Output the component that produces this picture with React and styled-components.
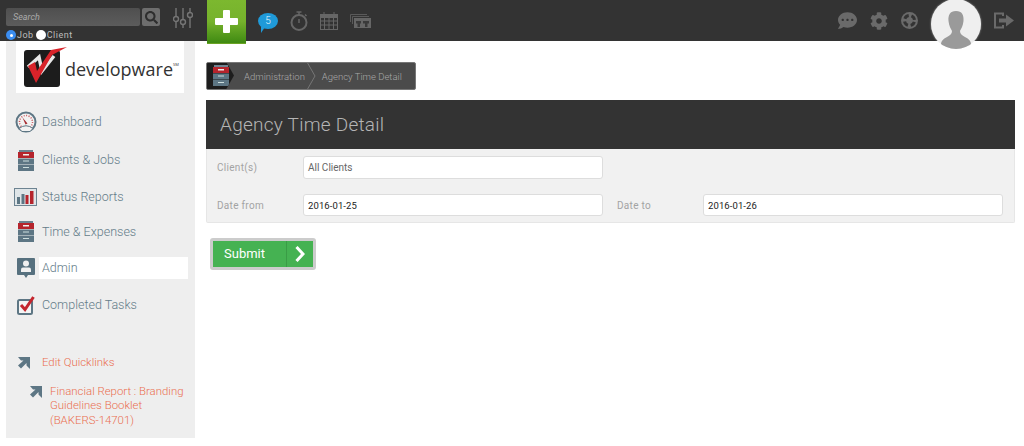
import React from "react";
import styled, { createGlobalStyle } from "styled-components";
import { FaSearch, FaCommentDots, FaCog } from "react-icons/fa";

const GlobalStyle = createGlobalStyle`
  html, body { margin: 0; padding: 0; background: #fff; }
  body { font-family: "Roboto", "Liberation Sans", sans-serif; overflow: hidden; }
  * { box-sizing: border-box; }
`;

const Page = styled.div`
  width: 1024px;
  height: 446px;
  position: relative;
  overflow: hidden;
`;

const TopBar = styled.header`
  height: 41px;
  background: #333;
  display: flex;
  align-items: flex-start;
  position: relative;
`;

const SearchBlock = styled.div`
  width: 207px;
  padding: 8px 0 0 6px;
  display: flex;
  flex-wrap: wrap;
  align-items: flex-start;
`;

const SearchField = styled.div`
  width: 134px;
  height: 18px;
  background: linear-gradient(#4f4f4f, #5c5c5c);
  border-radius: 2px;
  color: #aaa;
  font-size: 9px;
  font-style: italic;
  line-height: 19px;
  padding-left: 7px;
`;

const SearchBtn = styled.div`
  width: 18px;
  height: 18px;
  margin-left: 2px;
  background: #6e6e6e;
  border-radius: 2px;
  display: flex;
  align-items: center;
  justify-content: center;
  color: #2e2e2e;
`;

const Sliders = styled.svg`
  width: 20px;
  height: 20px;
  margin-left: 13px;
`;

const Radios = styled.div`
  width: 100%;
  display: flex;
  align-items: center;
  height: 12px;
  margin-top: 1px;
  color: #bdbdbd;
  font-size: 9px;
  letter-spacing: 0.5px;
`;

const Radio = styled.span`
  width: 10px;
  height: 10px;
  border-radius: 50%;
  background: ${(p) => (p.$on ? "#3b8df0" : "#fff")};
  display: flex;
  align-items: center;
  justify-content: center;
  margin-right: 1px;
  &:not(:first-child) { margin-left: 2px; }
  &::after {
    content: "";
    width: 3px;
    height: 3px;
    border-radius: 50%;
    background: ${(p) => (p.$on ? "#fff" : "transparent")};
  }
`;

const AddBtn = styled.div`
  width: 39px;
  height: 44px;
  background: linear-gradient(#7cb82f 0%, #76b22c 50%, #3f8a12 100%);
  border-bottom: 1px solid #6aa324;
  display: flex;
  align-items: center;
  justify-content: center;
  flex-shrink: 0;
  z-index: 3;
`;

const ToolIcons = styled.div`
  display: flex;
  align-items: center;
  height: 41px;
  margin-left: 12px;
  gap: 12px;
  color: #666;
`;

const Bubble = styled.div`
  position: relative;
  width: 20px;
  height: 16px;
  background: #1f9ad9;
  border-radius: 50%;
  color: #e8f5fc;
  font-size: 10px;
  font-weight: 300;
  text-align: center;
  line-height: 16px;
  &::after {
    content: "";
    position: absolute;
    left: 3px;
    bottom: -4px;
    border-left: 4px solid #1f9ad9;
    border-bottom: 6px solid transparent;
  }
`;

const RightIcons = styled.div`
  margin-left: auto;
  display: flex;
  align-items: center;
  gap: 13px;
  height: 41px;
  color: #6a6a6a;
  padding-right: 10px;
`;

const AvatarWrap = styled.div`
  width: 50px;
  height: 50px;
  margin-top: -1px;
  align-self: flex-start;
  border-radius: 50%;
  background: #efefef;
  overflow: hidden;
  box-shadow: 0 0 2px rgba(255, 255, 255, 0.6);
  z-index: 3;
  svg { display: block; }
`;

const Body = styled.div`
  display: flex;
  align-items: flex-start;
`;

const Sidebar = styled.aside`
  width: 189px;
  height: 397px;
  margin-left: 6px;
  background: #eee;
`;

const LogoBox = styled.div`
  width: 168px;
  height: 52px;
  margin-left: 10px;
  background: #fff;
  display: flex;
  align-items: center;
  padding-left: 8px;
`;

const LogoText = styled.span`
  color: #333;
  font-family: "Open Sans", "Liberation Sans", sans-serif;
  font-size: 18px;
  margin-left: -2px;
  position: relative;
  top: 2px;
  white-space: nowrap;
  sup { font-size: 4px; vertical-align: 10px; }
`;

const Nav = styled.nav`
  padding-top: 10px;
`;

const NavRow = styled.div`
  height: ${(p) => p.$h}px;
  display: flex;
  align-items: center;
  padding-left: 6px;
  color: #647c89;
  font-size: 12.5px;
  font-weight: 300;
`;

const NavIcon = styled.div`
  width: 27px;
  height: 24px;
  display: flex;
  align-items: center;
  justify-content: center;
  flex-shrink: 0;
`;

const NavLabel = styled.div`
  width: 149px;
  height: 22px;
  line-height: 22px;
  padding-left: 3px;
  background: ${(p) => (p.$active ? "#fff" : "transparent")};
`;

const Quick = styled.div`
  display: flex;
  align-items: flex-start;
  color: #ea6f50;
  font-size: 11.4px;
  font-weight: 300;
  line-height: 14.5px;
  white-space: nowrap;
  padding-left: ${(p) => p.$indent}px;
  margin-top: ${(p) => p.$top}px;
  svg { flex-shrink: 0; margin-right: ${(p) => p.$gap}px; margin-top: 1px; }
`;

const Main = styled.main`
  flex: 1;
  padding: 21px 9px 0 11px;
`;

const Crumbs = styled.div`
  width: 210px;
  height: 28px;
  background: #4b4b4b;
  border: 1px solid #777;
  border-radius: 2px;
  display: flex;
  align-items: center;
  color: #a9a9a9;
  font-size: 9.5px;
  font-weight: 300;
  white-space: nowrap;
  position: relative;
  overflow: hidden;
`;

const CrumbHead = styled.div`
  width: 28px;
  height: 28px;
  margin: -1px 10px 0 -1px;
  background: #1d1d1d;
  clip-path: polygon(0 0, 20px 0, 28px 50%, 20px 100%, 0 100%);
  display: flex;
  align-items: center;
  padding-left: 7px;
  flex-shrink: 0;
`;

const CrumbSep = styled.svg`
  width: 10px;
  height: 28px;
  margin: 0 6px 0 1px;
  flex-shrink: 0;
`;

const Panel = styled.section`
  margin-top: 10px;
  width: 809px;
`;

const PanelTitle = styled.h1`
  margin: 0;
  height: 49px;
  background: #333;
  color: #b5b5b5;
  font-size: 19px;
  font-weight: 300;
  letter-spacing: 0.25px;
  line-height: 50px;
  padding-left: 14px;
`;

const PanelBody = styled.div`
  height: 74px;
  background: #f1f1f1;
  border: 1px solid #e6e6e6;
  border-top: 0;
  border-radius: 0 0 2px 2px;
  padding: 7px 11px 0 10px;
  display: grid;
  grid-template-columns: 86px 300px 100px 300px;
  grid-template-rows: 23px 22px;
  row-gap: 15px;
  align-items: center;
`;

const FieldLabel = styled.label`
  color: #a3a3a3;
  font-size: 10px;
  letter-spacing: 0.3px;
  font-weight: 400;
  margin-left: ${(p) => p.$shift || 0}px;
`;

const Field = styled.div`
  height: 100%;
  background: #fff;
  border: 1px solid #ddd;
  border-radius: 3px;
  color: ${(p) => (p.$big ? "#666" : "#222")};
  font-size: ${(p) => (p.$big ? 10 : 9.5)}px;
  letter-spacing: ${(p) => (p.$big ? 0 : 0.1)}px;
  padding-left: 4px;
  display: flex;
  align-items: center;
`;

const SubmitWrap = styled.div`
  margin: 15px 0 0 4px;
  width: 106px;
  height: 32px;
  padding: 3px;
  background: #ccc;
  border-radius: 3px;
`;

const SubmitBtn = styled.button`
  width: 100%;
  height: 100%;
  padding: 0;
  border: 0;
  background: #45b252;
  color: #fff;
  font-family: inherit;
  font-size: 13px;
  font-weight: 400;
  display: flex;
  align-items: stretch;
  text-align: left;
  span { flex: 1; padding-left: 11px; line-height: 25px; }
  i { width: 27px; border-left: 1px solid #3a9c46; display: flex; align-items: center; justify-content: center; }
`;

const Cabinet = () => (
  <svg width="16" height="21" viewBox="0 0 16 21">
    <rect x="1" y="0" width="14" height="2" fill="#6d8391" />
    <rect x="0" y="2" width="16" height="6" fill="#b5242c" />
    <rect x="5" y="4" width="6" height="1.5" fill="#eee" />
    <rect x="0" y="8.5" width="16" height="6" fill="#5d7684" />
    <rect x="5" y="10.5" width="6" height="1" fill="#cdd" />
    <rect x="0" y="15" width="16" height="6" fill="#5d7684" />
    <rect x="5" y="17" width="6" height="1" fill="#cdd" />
  </svg>
);

const Arrow = () => (
  <svg width="12" height="13" viewBox="0 0 12 13">
    <path d="M0 1H12V13L8.500 9.500V7L3 12.500L0 9.500L5.500 4.500H3Z" fill="#5d7684" />
  </svg>
);

const navItems = [
  {
    label: "Dashboard",
    h: 38,
    icon: (
      <svg width="22" height="22" viewBox="0 0 22 22">
        <circle cx="11" cy="11" r="9.500" fill="#f2f2f2" stroke="#5d7684" strokeWidth="2" />
        <circle cx="11" cy="11" r="6.500" fill="none" stroke="#c8545a" strokeWidth="1.500" strokeDasharray="1 1.500" />
        <path d="M7.500 6.500L12.500 12.500L10.500 13.500Z" fill="#a52a30" />
        <path d="M4 17.500Q11 12 18 17.500L15 20.500H7Z" fill="#f2f2f2" stroke="#5d7684" />
      </svg>
    ),
  },
  { label: "Clients & Jobs", h: 38, icon: <Cabinet /> },
  {
    label: "Status Reports",
    h: 35,
    icon: (
      <svg width="23" height="18" viewBox="0 0 23 18">
        <rect x="0.500" y="0.500" width="22" height="17" fill="#dfe5e8" stroke="#6d8391" />
        <rect x="3" y="9" width="3" height="7" fill="#5d7684" />
        <rect x="7.500" y="6" width="3" height="10" fill="#5d7684" />
        <rect x="11.500" y="7" width="3" height="9" fill="#b5242c" />
        <rect x="16" y="3" width="3.500" height="13" fill="#b5242c" />
      </svg>
    ),
  },
  { label: "Time & Expenses", h: 35, icon: <Cabinet /> },
  {
    label: "Admin",
    h: 38,
    active: true,
    icon: (
      <svg width="18" height="21" viewBox="0 0 18 21">
        <path d="M1 0H17Q18 0 18 1V16Q18 17 17 17H11L9 20L7 17H1Q0 17 0 16V1Q0 0 1 0Z" fill="#56707e" />
        <circle cx="9" cy="5.500" r="3" fill="#f0f0f0" />
        <path d="M4 14V11.500Q4 9.500 6 9.500H12Q14 9.500 14 11.500V14Z" fill="#f0f0f0" />
      </svg>
    ),
  },
  {
    label: "Completed Tasks",
    h: 36,
    icon: (
      <svg width="18" height="19" viewBox="0 0 18 19">
        <rect x="1" y="4" width="14" height="14" rx="1.500" fill="#f4f4f4" stroke="#5d7684" strokeWidth="2" />
        <path d="M4 9L8 13.500L16.500 1" fill="none" stroke="#c4262e" strokeWidth="3" />
      </svg>
    ),
  },
];

const App = () => (
  <Page>
    <GlobalStyle />
    <TopBar>
      <SearchBlock>
        <SearchField>Search</SearchField>
        <SearchBtn>
          <FaSearch size={13} />
        </SearchBtn>
        <Sliders viewBox="0 0 20 20" fill="none" stroke="#757575" strokeWidth="1.400">
          <path d="M3 0V20M10 0V20M17 0V20" />
          <circle cx="3" cy="11" r="2.500" fill="#333" />
          <circle cx="10" cy="14" r="2.500" fill="#333" />
          <circle cx="17" cy="7" r="2.500" fill="#333" />
        </Sliders>
        <Radios>
          <Radio $on />
          Job
          <Radio />
          Client
        </Radios>
      </SearchBlock>
      <AddBtn>
        <svg width="23" height="23" viewBox="0 0 23 23">
          <path
            d="M8 1Q8 0 9 0H14Q15 0 15 1V8H22Q23 8 23 9V14Q23 15 22 15H15V22Q15 23 14 23H9Q8 23 8 22V15H1Q0 15 0 14V9Q0 8 1 8H8Z"
            fill="#fff"
          />
        </svg>
      </AddBtn>
      <ToolIcons>
        <Bubble>5</Bubble>
        <svg width="18" height="20" viewBox="0 0 18 20" fill="none" stroke="currentColor">
          <circle cx="9" cy="11.500" r="7.500" strokeWidth="2" />
          <path d="M6.500 1H11.500M9 1V4M15 3.500L16.500 5M9 8V12" strokeWidth="1.500" />
        </svg>
        <svg width="18" height="18" viewBox="0 0 18 18" fill="none" stroke="currentColor">
          <rect x="0.500" y="2.500" width="17" height="15" strokeWidth="1" />
          <rect x="0.500" y="2.500" width="17" height="3" fill="currentColor" />
          <path d="M4 0V3M14 0V3M0 9H18M0 13H18M4.500 5V18M9 5V18M13.500 5V18" strokeWidth="1" />
        </svg>
        <svg width="21" height="14" viewBox="0 0 21 14">
          <path d="M0.500 8V0.500H17" fill="none" stroke="#5a5a5a" />
          <path d="M2.500 10V2.500H19" fill="none" stroke="#5a5a5a" />
          <path d="M4 4H21V14H4Z" fill="#666" />
          <path d="M6 7H11V9.500H10V13H7.500V9.500H6ZM13 7H19V9.500H17.500V13H15V9.500H13Z" fill="#3a3a3a" />
        </svg>
      </ToolIcons>
      <RightIcons>
        <FaCommentDots size={19} />
        <FaCog size={18} />
        <svg width="17" height="17" viewBox="0 0 17 17" fill="none">
          <circle cx="8.500" cy="8.500" r="8.500" fill="currentColor" />
          <circle cx="8.500" cy="8.500" r="5" stroke="#333" strokeWidth="3" strokeDasharray="5 2.850" strokeDashoffset="-1.430" />
        </svg>
        <AvatarWrap>
          <svg width="50" height="50" viewBox="0 0 50 50">
            <path
              d="M25 12C19 12 17 16 17.500 22C18 27 20 30 21 32C21 35 19 36 16 38C12 40 10 42 10 45V50H40V45C40 42 38 40 34 38C31 36 29 35 29 32C30 30 32 27 32.500 22C33 16 31 12 25 12Z"
              fill="#9a9a9a"
            />
          </svg>
        </AvatarWrap>
        <svg width="20" height="17" viewBox="0 0 20 17" fill="none" stroke="currentColor">
          <path d="M9 4V1.500H1V15.500H9V13" strokeWidth="2" />
          <path d="M5 6.500H12V2.500L20 8.500L12 14.500V10.500H5Z" fill="currentColor" stroke="none" />
        </svg>
      </RightIcons>
    </TopBar>
    <Body>
      <Sidebar>
        <LogoBox>
          <svg width="43" height="40" viewBox="0 0 43 40">
            <rect x="0" y="3" width="36" height="37" rx="3" fill="#1c1c1c" />
            <path d="M4 20L15 10L18 24L30 9" fill="none" stroke="#e8e8e8" strokeWidth="3.500" />
            <path d="M4 19L11 15L13 24L27 3L43 0L28 8L12 36Z" fill="#d8232a" />
          </svg>
          <LogoText>
            developware<sup>SM</sup>
          </LogoText>
        </LogoBox>
        <Nav>
          {navItems.map((item) => (
            <NavRow key={item.label} $h={item.h}>
              <NavIcon>{item.icon}</NavIcon>
              <NavLabel $active={item.active}>{item.label}</NavLabel>
            </NavRow>
          ))}
        </Nav>
        <Quick $indent={12} $gap={12} $top={32}>
          <Arrow />
          Edit Quicklinks
        </Quick>
        <Quick $indent={24} $gap={8} $top={14}>
          <Arrow />
          <span>
            Financial Report : Branding
            <br />
            Guidelines Booklet
            <br />
            (BAKERS-14701)
          </span>
        </Quick>
      </Sidebar>
      <Main>
        <Crumbs>
          <CrumbHead>
            <Cabinet />
          </CrumbHead>
          Administration
          <CrumbSep viewBox="0 0 10 28" fill="none" stroke="#777">
            <path d="M1 0L9 14L1 28" />
          </CrumbSep>
          Agency Time Detail
        </Crumbs>
        <Panel>
          <PanelTitle>Agency Time Detail</PanelTitle>
          <PanelBody>
            <FieldLabel>Client(s)</FieldLabel>
            <Field $big>All Clients</Field>
            <span />
            <span />
            <FieldLabel>Date from</FieldLabel>
            <Field>2016-01-25</Field>
            <FieldLabel $shift={14}>Date to</FieldLabel>
            <Field>2016-01-26</Field>
          </PanelBody>
        </Panel>
        <SubmitWrap>
          <SubmitBtn>
            <span>Submit</span>
            <i>
              <svg width="10" height="16" viewBox="0 0 10 16" fill="none" stroke="#fff" strokeWidth="3">
                <path d="M1.500 1L8 8L1.500 15" />
              </svg>
            </i>
          </SubmitBtn>
        </SubmitWrap>
      </Main>
    </Body>
  </Page>
);

export default App;
